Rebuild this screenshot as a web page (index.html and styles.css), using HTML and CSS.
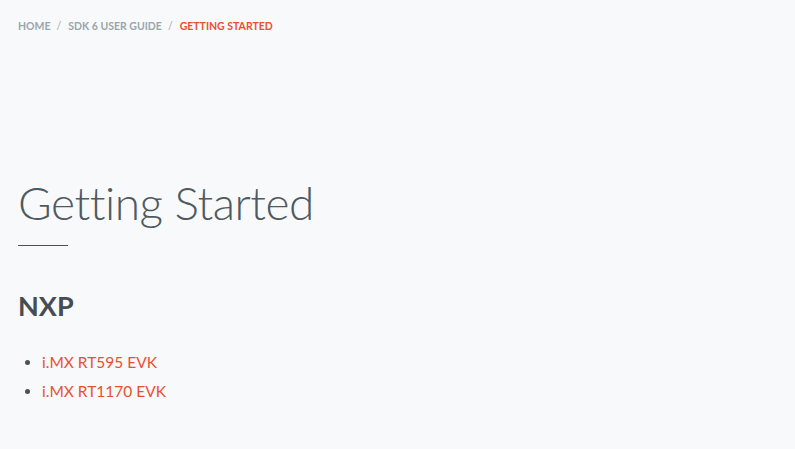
FILE: index.html
```html
<!DOCTYPE html>
<html lang="en">
<head>
    <meta charset="UTF-8">
    <title>Getting Started</title>
    <link rel="stylesheet" href="styles.css">
</head>
<body>

<div class="page">
    <!-- Breadcrumb -->
    <nav class="breadcrumb">
        <a href="#">Home</a>
        <span class="sep">/</span>
        <a href="#">SDK 6 User Guide</a>
        <span class="sep">/</span>
        <span class="current">Getting Started</span>
    </nav>

    <!-- Page Title -->
    <h1 class="title">Getting Started</h1>
    <hr class="title-rule">

    <!-- Boards -->
    <h2 class="vendor">NXP</h2>
    <ul class="boards">
        <li><a href="#">i.MX RT595 EVK</a></li>
        <li><a href="#">i.MX RT1170 EVK</a></li>
    </ul>
</div>

</body>
</html>
```

FILE: styles.css
```css
/* Global Styling */
* {
    margin: 0;
    padding: 0;
    box-sizing: border-box;
}

body {
    background-color: #f8f9fa;
    color: #4a5256;
    font-family: Lato, "Noto Sans", sans-serif;
    font-variant-ligatures: none;
}

.page {
    padding: 18px 18px 0 18px;
}

/* Breadcrumb */
.breadcrumb {
    display: flex;
    align-items: center;
    gap: 6px;
    font-size: 10.5px;
    font-weight: 700;
    text-transform: uppercase;
    line-height: 16px;
}

.breadcrumb a {
    color: #98a6ad;
    text-decoration: none;
}

.breadcrumb .sep {
    color: #98a6ad;
    font-weight: 400;
    margin-right: 1px;
}

.breadcrumb .current {
    color: #e9502f;
}

/* Page Title */
.title {
    margin-top: 139px;
    font-size: 46px;
    font-weight: 300;
    line-height: 60px;
    letter-spacing: -0.5px;
    color: #4f5a60;
}

.title-rule {
    width: 50px;
    border: none;
    border-top: 1px solid #4a5256;
    margin-top: 12px;
}

/* Vendor Heading */
.vendor {
    margin-top: 42px;
    font-size: 27px;
    font-weight: 700;
    line-height: 36px;
    color: #454d51;
}

/* Board List */
.boards {
    margin-top: 24px;
    padding-left: 24px;
    font-size: 15.5px;
    line-height: 29px;
}

.boards li::marker {
    color: #4a5256;
}

.boards a {
    color: #e9502f;
    text-decoration: none;
}
```
